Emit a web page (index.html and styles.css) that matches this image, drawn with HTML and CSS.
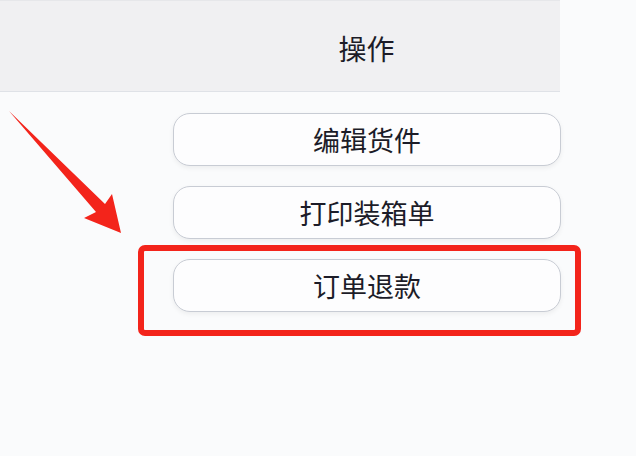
FILE: index.html
```html
<!DOCTYPE HTML>
<html lang="zh-CN">
<head>
<meta charset="UTF-8">
<title>操作</title>
<link rel="stylesheet" href="styles.css">
</head>
<body>
  <div class="opHead">操作</div>
  <ul class="opList">
    <li><button class="opBtn">编辑货件</button></li>
    <li><button class="opBtn">打印装箱单</button></li>
    <li><button class="opBtn">订单退款</button></li>
  </ul>
  <div class="markBox"></div>
  <svg class="markArrow" width="130" height="240" viewBox="0 0 130 240">
    <polygon points="9,111 105,204 112,194 121,233 84,218 96,212" fill="#f3241b"/>
  </svg>
</body>
</html>
```

FILE: styles.css
```css
* { margin: 0; padding: 0; box-sizing: border-box; }
ul { list-style: none; }
body {
  background: #fafbfc;
  font-family: "Noto Sans CJK SC", "Noto Sans", sans-serif;
  color: #1c1c28;
  width: 636px;
  height: 456px;
  overflow: hidden;
  position: relative;
}
.opHead {
  width: 560px;
  height: 92px;
  padding-left: 173px;
  padding-top: 4px;
  display: flex;
  align-items: center;
  justify-content: center;
  background: #f0f0f2;
  border-top: 1px solid #e6e7ea;
  border-bottom: 1px solid #dfe2e7;
  font-size: 28px;
}
.opList {
  margin-left: 173px;
  width: 388px;
  padding-top: 21px;
  display: flex;
  flex-direction: column;
  gap: 20px;
}
.opBtn {
  display: block;
  width: 100%;
  height: 53px;
  background: #fdfdfe;
  border: 1px solid #c8ccd4;
  border-radius: 17px;
  box-shadow: 0 2px 5px rgba(0, 0, 0, 0.06);
  font-family: inherit;
  font-size: 27px;
  color: #1c1c28;
}
.markBox {
  position: absolute;
  left: 138px;
  top: 245px;
  width: 443px;
  height: 91px;
  border: 6px solid #f3241b;
  border-radius: 7px;
}
.markArrow {
  position: absolute;
  left: 0;
  top: 0;
}
```
